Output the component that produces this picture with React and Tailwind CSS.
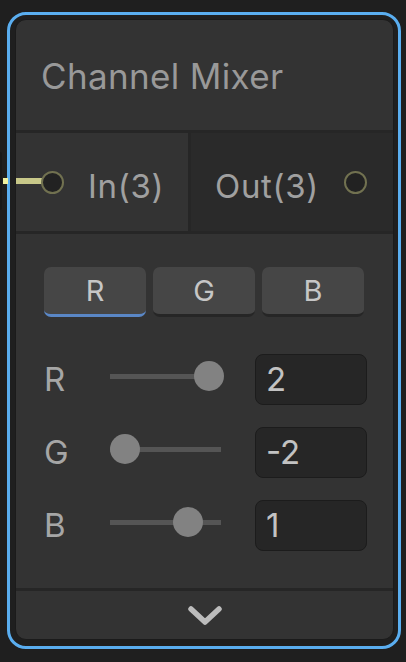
const channels = [
  { name: "R", value: 2 },
  { name: "G", value: -2 },
  { name: "B", value: 1 },
];

function Port() {
  return (
    <div className="w-[23px] h-[23px] rounded-full border-[2.5px] border-[#717150] bg-[#222222] shrink-0" />
  );
}

function SliderRow({ name, value }) {
  // thumb centre goes from 15px to 99px over -2..2
  const left = 15 + ((value + 2) / 4) * 84;
  return (
    <div className="flex items-center h-[51px]">
      <div className="w-[66px] shrink-0 text-[33px] leading-none text-[#a6a6a6] tracking-[0.02em]">{name}</div>
      <div className="relative w-[111px] shrink-0 h-[30px] mb-[7px]">
        <div className="absolute left-0 right-0 top-[12.5px] h-[5px] bg-[#555555]" />
        <div
          className="absolute top-0 w-[30px] h-[30px] -ml-[15px] rounded-full bg-[#828282]"
          style={{ left: left }}
        />
      </div>
      <div className="ml-[34px] w-[112px] shrink-0 h-[51px] rounded-[8px] border-[1.5px] border-[#1c1c1c] bg-[#262626] flex items-center pl-[10px] text-[33px] leading-none text-[#c2c2c2]">
        {value}
      </div>
    </div>
  );
}

export default function App() {
  return (
    <div className="relative w-[406px] h-[662px] bg-[#1f1f1f] pt-[12px] pl-[7px] font-['Inter','Noto_Sans',sans-serif] overflow-hidden">
      {/* edge coming from the left */}
      <div className="absolute left-0 top-[152px] w-[2px] h-[58px] rounded-r bg-[#191919]" />
      <div className="absolute left-[3px] top-[178px] w-[5px] h-[6px] bg-[#f2f2a0]" />

      <div className="w-[394px] h-[637px] border-[3px] border-[#5aaef0] rounded-[19px] pt-[4px] pl-[5px] pr-[4px] pb-[6px]">
        <div className="h-full border border-[#1b1b1b] rounded-[11px] bg-[#333333] flex flex-col overflow-hidden">
          {/* Header */}
          <div className="h-[113px] shrink-0 border-b-[3px] border-[#262626] flex items-center pl-[25px]">
            <span className="text-[35px] leading-none text-[#999999] tracking-[0.01em] mt-[3px]">Channel Mixer</span>
          </div>

          {/* Ports */}
          <div className="h-[101px] shrink-0 border-b-[3px] border-[#262626] flex">
            <div className="relative w-[172px] bg-[#333333] flex items-center pl-[25px] gap-[24px]">
              <div className="absolute left-0 top-[45px] w-[26px] h-[6px] bg-[#c8c889]" />
              <div className="relative">
                <Port />
              </div>
              <span className="text-[33px] leading-none text-[#a0a0a0] tracking-[0.02em] mt-[9px]">In(3)</span>
            </div>
            <div className="w-[3px] bg-[#262626]" />
            <div className="flex-1 bg-[#2a2a2a] flex items-center justify-between pl-[24px] pr-[26px]">
              <span className="text-[33px] leading-none text-[#a0a0a0] tracking-[0.02em] mt-[9px]">Out(3)</span>
              <Port />
            </div>
          </div>

          {/* Controls */}
          <div className="h-[357px] shrink-0 border-b-[3px] border-[#262626] pt-[33px] pl-[28px] pr-[29px]">
            <div className="flex gap-[7px]">
              {channels.map((c, i) => (
                <div
                  key={c.name}
                  className={`flex-1 h-[50px] rounded-[7px] bg-[#464646] border-b-[3px] flex items-center justify-center text-[29px] leading-none text-[#c6c6c6] ${
                    i === 0 ? "border-[#5a87c6]" : "border-[#262626]"
                  }`}
                >
                  {c.name}
                </div>
              ))}
            </div>
            <div className="mt-[37px] flex flex-col gap-[22px]">
              {channels.map(c => (
                <SliderRow key={c.name} name={c.name} value={c.value} />
              ))}
            </div>
          </div>

          {/* Footer */}
          <div className="flex-1 flex items-center justify-center">
            <svg width="34" height="19" viewBox="0 0 34 19" fill="none">
              <polyline
                points="3,3 17,16 31,3"
                stroke="#bcbcbc"
                strokeWidth="5.5"
                strokeLinecap="round"
                strokeLinejoin="round"
              />
            </svg>
          </div>
        </div>
      </div>
    </div>
  );
}
